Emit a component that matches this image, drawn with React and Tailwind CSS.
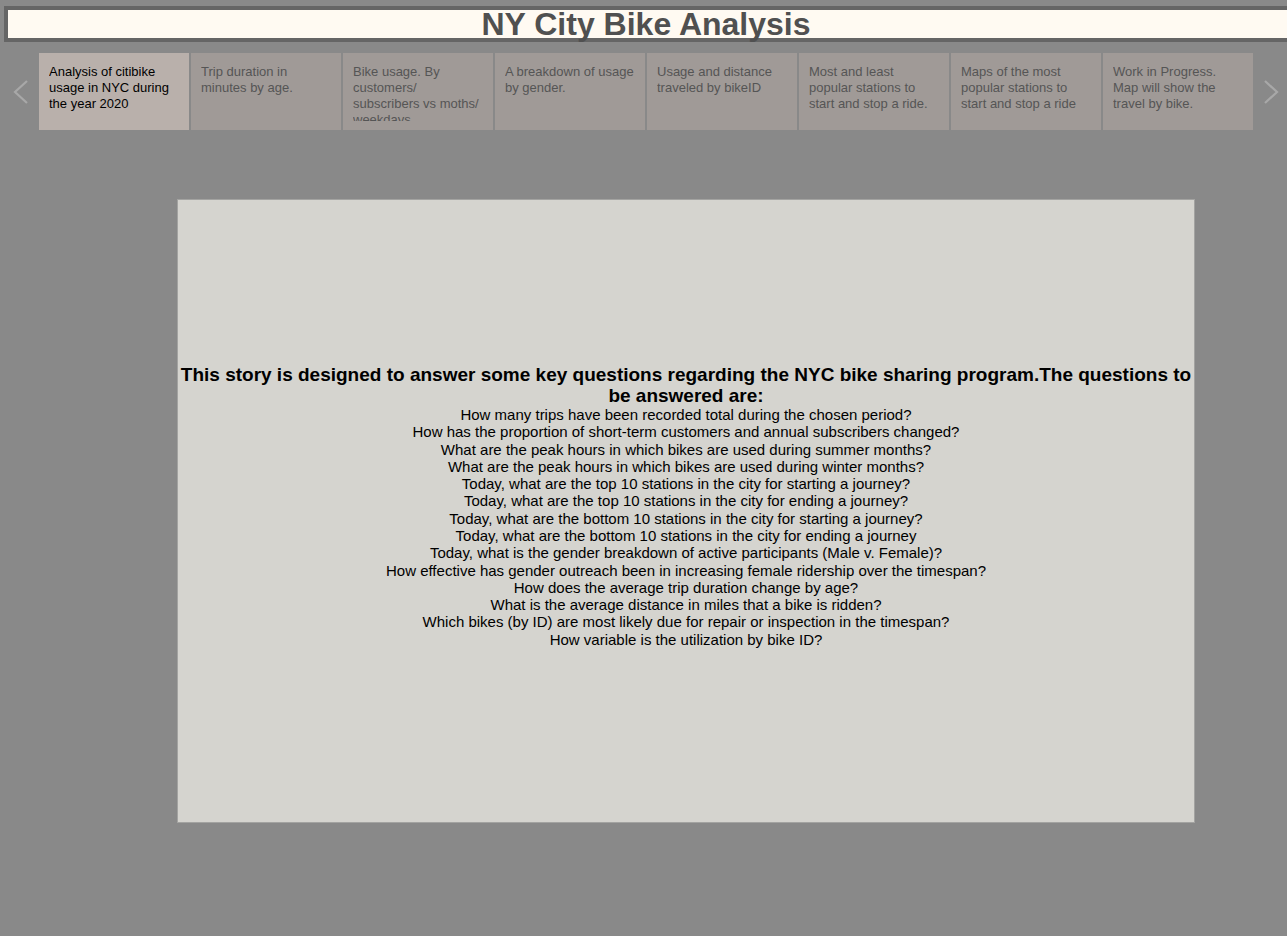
import React from 'react'

const tabs = [
  'Analysis of citibike usage in NYC during the year 2020',
  'Trip duration in minutes by age.',
  'Bike usage. By customers/ subscribers vs moths/ weekdays',
  'A breakdown of usage by gender.',
  'Usage and distance traveled by bikeID',
  'Most and least popular stations to start and stop a ride.',
  'Maps of the most popular stations to start and stop a ride',
  'Work in Progress. Map will show the travel by bike.',
]

const questions = [
  'How many trips have been recorded total during the chosen period?',
  'How has the proportion of short-term customers and annual subscribers changed?',
  'What are the peak hours in which bikes are used during summer months?',
  'What are the peak hours in which bikes are used during winter months?',
  'Today, what are the top 10 stations in the city for starting a journey?',
  'Today, what are the top 10 stations in the city for ending a journey?',
  'Today, what are the bottom 10 stations in the city for starting a journey?',
  'Today, what are the bottom 10 stations in the city for ending a journey',
  'Today, what is the gender breakdown of active participants (Male v. Female)?',
  'How effective has gender outreach been in increasing female ridership over the timespan?',
  'How does the average trip duration change by age?',
  'What is the average distance in miles that a bike is ridden?',
  'Which bikes (by ID) are most likely due for repair or inspection in the timespan?',
  'How variable is the utilization by bike ID?',
]

function Chevron({ dir }) {
  const pts = dir === 'left' ? '15,1 3,12 15,23' : '3,1 15,12 3,23'
  return (
    <svg width="18" height="24" viewBox="0 0 18 24" fill="none">
      <polyline points={pts} stroke="#a8a8a8" strokeWidth="2.2" />
    </svg>
  )
}

export default function App() {
  return (
    <div className="w-[1287px] h-[936px] overflow-hidden bg-[#898989] font-['Liberation_Sans',Arial,sans-serif]">
      <div className="pt-[6px] pl-[4px]">
        <div className="w-[1290px] h-[36px] border-4 border-[#656565] bg-[#fffaf2] flex items-center justify-center">
          <h1 className="text-[32px] leading-[28px] font-bold text-[#505050] -ml-[6px]">NY City Bike Analysis</h1>
        </div>
      </div>

      <div className="mt-[11px] flex items-center h-[77px]">
        <div className="w-[39px] flex justify-center pl-[2px]">
          <Chevron dir="left" />
        </div>
        <div className="flex gap-[2px]">
          {tabs.map((t, i) => (
            <div
              key={i}
              className={
                'w-[150px] h-[77px] pt-[11px] pl-[10px] pr-[11px] ' +
                (i === 0 ? 'bg-[#b9b0ab] text-black' : 'bg-[#a09a97] text-[#555555]')
              }
            >
              <div className="h-[57px] overflow-hidden text-[13px] leading-[16px]">{t}</div>
            </div>
          ))}
        </div>
        <div className="flex-1 flex justify-center pl-[2px]">
          <Chevron dir="right" />
        </div>
      </div>

      <div className="mt-[69px] ml-[177px] w-[1018px] h-[624px] border border-[#a3a3a1] bg-[#d5d4cf] flex flex-col items-center justify-center text-center text-black pb-[10px]">
        <h2 className="text-[19px] font-bold leading-[21px]">
          This story is designed to answer some key questions regarding the NYC bike sharing program.The questions to be answered are:
        </h2>
        <div className="text-[15px] leading-[17.3px]">
          {questions.map((q, i) => (
            <div key={i}>{q}</div>
          ))}
        </div>
      </div>
    </div>
  )
}
